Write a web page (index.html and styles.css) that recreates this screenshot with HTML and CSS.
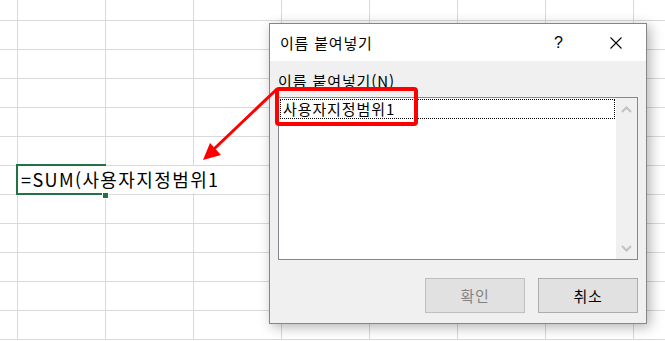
FILE: index.html
```html
<!DOCTYPE html>
<html lang="ko">
<head>
  <meta charset="UTF-8" />
  <meta name="viewport" content="width=device-width, initial-scale=1.0"/>
  <title>이름 붙여넣기</title>
  <link rel="stylesheet" href="styles.css">
</head>
<body>

  <div class="sheet">
    <div class="grid">
      <!-- 12 rows x 9 columns -->
      <div></div><div></div><div></div><div></div><div></div><div></div><div></div><div></div><div></div>
      <div></div><div></div><div></div><div></div><div></div><div></div><div></div><div></div><div></div>
      <div></div><div></div><div></div><div></div><div></div><div></div><div></div><div></div><div></div>
      <div></div><div></div><div></div><div></div><div></div><div></div><div></div><div></div><div></div>
      <div></div><div></div><div></div><div></div><div></div><div></div><div></div><div></div><div></div>
      <div></div><div></div><div></div><div></div><div></div><div></div><div></div><div></div><div></div>
      <div></div><div></div><div></div><div></div><div></div><div></div><div></div><div></div><div></div>
      <div></div><div></div><div></div><div></div><div></div><div></div><div></div><div></div><div></div>
      <div></div><div></div><div></div><div></div><div></div><div></div><div></div><div></div><div></div>
      <div></div><div></div><div></div><div></div><div></div><div></div><div></div><div></div><div></div>
      <div></div><div></div><div></div><div></div><div></div><div></div><div></div><div></div><div></div>
      <div></div><div></div><div></div><div></div><div></div><div></div><div></div><div></div><div></div>
    </div>

    <div class="active-cell"></div>
    <div class="fill-handle"></div>
    <div class="cell-editor">=SUM(사용자지정범위1</div>
  </div>

  <div class="dialog">
    <div class="titlebar">
      <span class="title">이름 붙여넣기</span>
      <span class="help">?</span>
      <svg class="close" width="12" height="12" viewBox="0 0 12 12">
        <path d="M0.5 0.5 L11.5 11.5 M11.5 0.5 L0.5 11.5" stroke="#000" stroke-width="1.1" fill="none"/>
      </svg>
    </div>
    <div class="dialog-body">
      <div class="field-label">이름 붙여넣기(N)</div>
      <div class="listbox">
        <div class="items">
          <div class="item">사용자지정범위1</div>
        </div>
        <div class="scrollbar">
          <svg width="11" height="7" viewBox="0 0 11 7">
            <path d="M1 6 L5.5 1.5 L10 6" stroke="#c2c2c2" stroke-width="2" fill="none"/>
          </svg>
          <svg width="11" height="7" viewBox="0 0 11 7">
            <path d="M1 1 L5.5 5.5 L10 1" stroke="#c2c2c2" stroke-width="2" fill="none"/>
          </svg>
        </div>
      </div>
      <div class="buttons">
        <button class="btn btn-disabled">확인</button>
        <button class="btn">취소</button>
      </div>
    </div>
  </div>

  <!-- annotation: red box + arrow -->
  <svg class="annotation" width="665" height="341" viewBox="0 0 665 341">
    <rect x="277" y="89" width="139" height="35" rx="2" fill="none" stroke="#ff0000" stroke-width="4"/>
    <line x1="277" y1="89" x2="214" y2="149" stroke="#ff0000" stroke-width="3"/>
    <polygon points="203,160 210,143 221,155" fill="#ff0000"/>
  </svg>

</body>
</html>
```

FILE: styles.css
```css
body {
  margin: 0;
  background-color: #ffffff;
  font-family: "Noto Sans CJK KR", "Noto Sans", sans-serif;
  overflow: hidden;
}

.sheet {
  position: relative;
  width: 665px;
  height: 341px;
  overflow: hidden;
}

.grid {
  display: grid;
  grid-template-columns: repeat(9, 88px);
  grid-auto-rows: 29px;
  margin-left: -70px;
  margin-top: -8px;
}

.grid div {
  box-sizing: border-box;
  border-right: 1px solid #d9d9d9;
  border-bottom: 1px solid #d9d9d9;
}

.active-cell {
  position: absolute;
  left: 16px;
  top: 164px;
  width: 90px;
  height: 31px;
  box-sizing: border-box;
  border: 2px solid #217346;
}

.fill-handle {
  position: absolute;
  left: 102px;
  top: 192px;
  width: 5px;
  height: 5px;
  background-color: #217346;
  border: 1px solid #ffffff;
}

.cell-editor {
  position: absolute;
  left: 18px;
  top: 166px;
  height: 27px;
  padding: 0 4px 0 3px;
  background-color: #ffffff;
  font-size: 18px;
  letter-spacing: 1.4px;
  line-height: 27px;
  color: #000;
  white-space: nowrap;
}

.dialog {
  position: absolute;
  left: 269px;
  top: 23px;
  width: 378px;
  height: 301px;
  box-sizing: border-box;
  border: 1px solid #868686;
  background-color: #f0f0f0;
  box-shadow: 3px 3px 12px rgba(0, 0, 0, 0.3);
  display: flex;
  flex-direction: column;
}

.titlebar {
  height: 37px;
  background-color: #ffffff;
  display: flex;
  align-items: center;
  padding: 0 24px 0 10px;
}

.title {
  flex: 1;
  font-size: 15px;
  letter-spacing: 0.8px;
  color: #000;
}

.help {
  font-family: "Liberation Sans", sans-serif;
  font-size: 16px;
  margin-right: 47px;
}

.dialog-body {
  flex: 1;
  padding: 10px 8px 0 8px;
  display: flex;
  flex-direction: column;
}

.field-label {
  font-size: 15px;
  letter-spacing: 0.9px;
  line-height: 20px;
  color: #000;
  margin-bottom: 6px;
}

.listbox {
  height: 163px;
  box-sizing: border-box;
  border: 1px solid #828790;
  background-color: #ffffff;
  display: flex;
}

.items {
  flex: 1;
  padding: 1px;
}

.item {
  height: 20px;
  box-sizing: border-box;
  border: 1px dotted #000;
  padding-left: 2px;
  font-size: 15px;
  letter-spacing: 0.9px;
  line-height: 17px;
  color: #000;
}

.scrollbar {
  width: 21px;
  background-color: #f0f0f0;
  display: flex;
  flex-direction: column;
  justify-content: space-between;
  align-items: center;
  padding: 8px 0 7px 0;
}

.buttons {
  display: flex;
  justify-content: flex-end;
  gap: 13px;
  margin-top: 18px;
}

.btn {
  width: 100px;
  height: 35px;
  box-sizing: border-box;
  background-color: #e1e1e1;
  border: 1px solid #adadad;
  font-family: "Noto Sans CJK KR", sans-serif;
  font-size: 15px;
  letter-spacing: 0.8px;
  color: #000;
  padding: 0;
}

.btn-disabled {
  color: #838383;
  border-color: #bfbfbf;
  background-color: #e1e1e1;
}

.annotation {
  position: absolute;
  left: 0;
  top: 0;
  pointer-events: none;
}
```
